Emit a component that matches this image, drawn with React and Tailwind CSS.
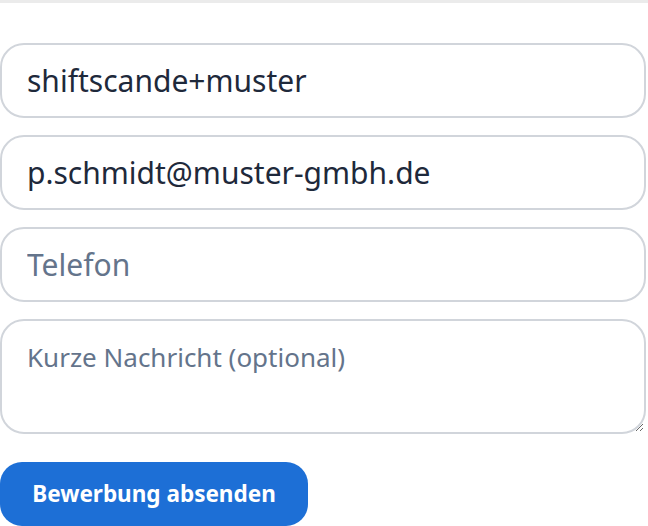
export default function App() {
  const font = { fontFamily: '"Noto Sans", "Open Sans", sans-serif' };
  return (
    <div className="w-[648px] h-[526px] overflow-hidden bg-white" style={font}>
      <div className="h-[3px] bg-[#ebebeb]" />
      <div className="pt-[40px] flex flex-col w-[646px]">
        <input
          className="h-[75px] rounded-[24px] border-2 border-[#d1d5db] px-[25px] text-[30px] text-[#1e293b] placeholder-[#64748b] outline-none"
          defaultValue="shiftscande+muster"
        />
        <input
          className="mt-[17px] h-[75px] rounded-[24px] border-2 border-[#d1d5db] px-[25px] text-[30px] text-[#1e293b] placeholder-[#64748b] outline-none"
          defaultValue="p.schmidt@muster-gmbh.de"
        />
        <input
          className="mt-[17px] h-[75px] rounded-[24px] border-2 border-[#d1d5db] px-[25px] text-[30px] text-[#1e293b] placeholder:text-[#64748b] outline-none"
          placeholder="Telefon"
        />
        <textarea
          className="mt-[17px] h-[115px] rounded-[24px] border-2 border-[#d1d5db] px-[25px] pt-[18px] text-[26px] leading-[36px] text-[#1e293b] placeholder:text-[#64748b] outline-none resize-y"
          placeholder="Kurze Nachricht (optional)"
        />
        <div className="mt-[28px]">
          <button className="h-[64px] w-[308px] rounded-[22px] bg-[#1d6fd6] text-white text-[22.5px] font-bold">
            Bewerbung absenden
          </button>
        </div>
      </div>
    </div>
  );
}
